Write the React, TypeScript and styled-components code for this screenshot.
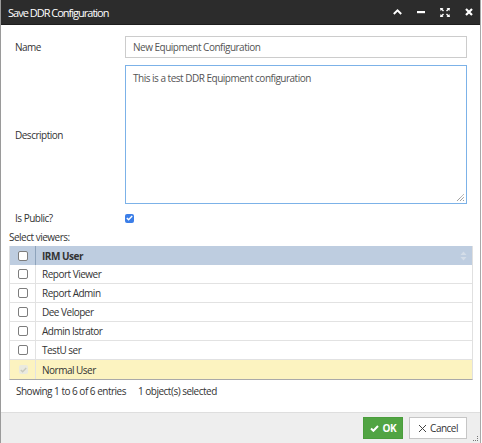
import React from "react";
import styled, { createGlobalStyle } from "styled-components";

const Global = createGlobalStyle`
  html, body { margin: 0; padding: 0; background: #ffffff; }
  body { font-family: "Open Sans", "Noto Sans", sans-serif; }
  * { box-sizing: border-box; }
`;

const Dialog = styled.div`
  width: 481px;
  height: 443px;
  display: flex;
  flex-direction: column;
  background: #ffffff;
  border-left: 1px solid #9a9a9a;
  border-right: 1px solid #a8a8a8;
  font-family: "Open Sans", "Noto Sans", sans-serif;
  font-size: 10px;
  letter-spacing: -0.5px;
  color: #333333;
  position: relative;
`;

const TitleBar = styled.div`
  height: 25px;
  flex: none;
  background: #2c2c2c;
  border-bottom: 1px solid #1e1e1e;
  display: flex;
  align-items: center;
  padding: 0 7px 0 7px;
`;

const Title = styled.div`
  flex: 1;
  color: #ffffff;
  font-size: 11px;
  letter-spacing: -1px;
`;

const TitleIcons = styled.div`
  display: flex;
  align-items: center;
  gap: 15px;
`;

const IconBox = styled.span<{ w: number }>`
  display: inline-flex;
  align-items: center;
  justify-content: center;
  width: ${(p) => p.w}px;
  height: 10px;
`;

const Body = styled.div`
  padding: 11px 7px 0 8px;
  display: flex;
  flex-direction: column;
`;

const FormGrid = styled.div`
  display: grid;
  grid-template-columns: 110px 1fr;
  row-gap: 7px;
  padding: 0 6px 0 6px;
  align-items: center;
`;

const Label = styled.label`
  font-size: 10px;
  color: #333;
`;

const TextInput = styled.div`
  height: 22px;
  border: 1px solid #cccccc;
  padding: 0 7px;
  display: flex;
  align-items: center;
  color: #555;
  font-size: 10px;
`;

const TextArea = styled.div`
  height: 139px;
  border: 1px solid #7cb2e8;
  padding: 5px 7px;
  color: #555;
  font-size: 10px;
  position: relative;
`;

const Grip = styled.svg`
  position: absolute;
  right: 1px;
  bottom: 1px;
`;

const Check = styled.span<{ disabled?: boolean }>`
  width: 9px;
  height: 9px;
  border-radius: 2px;
  background: ${(p) => (p.disabled ? "#eaeadf" : "#3b7ee8")};
  display: inline-flex;
  align-items: center;
  justify-content: center;
`;

const EmptyCheck = styled.span`
  width: 10px;
  height: 10px;
  border: 1px solid #7d7d7d;
  border-radius: 2px;
  background: #ffffff;
  display: inline-block;
`;

const PublicRow = styled.div`
  height: 13px;
  display: flex;
  align-items: center;
`;

const SectionLabel = styled.div`
  margin-top: 6px;
  height: 12px;
  line-height: 12px;
  font-size: 10px;
  color: #333;
`;

const Table = styled.div`
  margin-top: 3px;
  border-left: 1px solid #e0e0e0;
  border-right: 1px solid #e0e0e0;
  border-bottom: 1px solid #a9a9a9;
`;

const Row = styled.div<{ variant?: "head" | "selected" }>`
  display: grid;
  grid-template-columns: 26px 1fr;
  height: 19px;
  background: ${(p) =>
    p.variant === "head" ? "#becde0" : p.variant === "selected" ? "#fcf3c0" : "#ffffff"};
  border-bottom: ${(p) => (p.variant === "head" ? "none" : "1px solid #e2e2e2")};
  font-weight: ${(p) => (p.variant === "head" ? 700 : 400)};
  position: relative;
  &:last-child { border-bottom: none; }
`;

const CheckCell = styled.div<{ head?: boolean }>`
  display: flex;
  align-items: center;
  justify-content: center;
  border-right: 1px solid ${(p) => (p.head ? "#8ea3bb" : "#e2e2e2")};
  padding-left: 1px;
`;

const NameCell = styled.div`
  display: flex;
  align-items: center;
  padding-left: 6px;
  font-size: 10px;
  color: #333;
`;

const SortIcon = styled.svg`
  position: absolute;
  right: 5px;
  top: 5px;
`;

const Info = styled.div`
  margin-top: 4px;
  padding-left: 7px;
  height: 14px;
  line-height: 14px;
  font-size: 10px;
  color: #333;
  display: flex;
  gap: 12px;
`;

const ButtonBar = styled.div`
  margin-top: auto;
  height: 31px;
  flex: none;
  background: #eeeeee;
  border-top: 1px solid #dedede;
  display: flex;
  justify-content: flex-end;
  align-items: flex-start;
  padding: 4px 13px 0 0;
  gap: 6px;
  position: relative;
`;

const Button = styled.button<{ primary?: boolean }>`
  height: 22px;
  padding: 0 ${(p) => (p.primary ? 6 : 8)}px;
  border: 1px solid ${(p) => (p.primary ? "#4a9d3c" : "#c6c6c6")};
  background: ${(p) => (p.primary ? "#51a443" : "#ffffff")};
  color: ${(p) => (p.primary ? "#ffffff" : "#333333")};
  font-family: "Open Sans", "Noto Sans", sans-serif;
  font-size: 10px;
  letter-spacing: -0.5px;
  font-weight: ${(p) => (p.primary ? 700 : 400)};
  display: inline-flex;
  align-items: center;
  gap: 3px;
  border-radius: 0;
`;

const ResizeDots = styled.svg`
  position: absolute;
  right: 1px;
  bottom: 1px;
`;

const users = ["Report Viewer", "Report Admin", "Dee Veloper", "Admin Istrator", "TestU ser", "Normal User"];

const Tick = ({ color }: { color: string }) => (
  <svg width="7" height="6" viewBox="0 0 7 6">
    <path d="M0.8 3.1 L2.6 4.8 L6.2 1" stroke={color} strokeWidth="1.4" fill="none" />
  </svg>
);

export default function App() {
  return (
    <>
      <Global />
      <Dialog>
        <TitleBar>
          <Title>Save DDR Configuration</Title>
          <TitleIcons>
            <IconBox w={9}>
              <svg width="9" height="6" viewBox="0 0 9 6">
                <path d="M0.8 5 L4.5 1.4 L8.2 5" stroke="#fff" strokeWidth="2" fill="none" />
              </svg>
            </IconBox>
            <IconBox w={8}>
              <svg width="8" height="3" viewBox="0 0 8 3">
                <rect x="0" y="0" width="8" height="2.2" fill="#fff" />
              </svg>
            </IconBox>
            <IconBox w={10}>
              <svg width="10" height="9" viewBox="0 0 10 9">
                <g fill="#fff">
                  <path d="M0 0 H3.5 L2.5 1 L4 2.5 L3 3.5 L1.5 2 L0.6 3 Z" />
                  <path d="M10 0 H6.5 L7.5 1 L6 2.5 L7 3.5 L8.5 2 L9.4 3 Z" />
                  <path d="M0 9 H3.5 L2.5 8 L4 6.5 L3 5.5 L1.5 7 L0.6 6 Z" />
                  <path d="M10 9 H6.5 L7.5 8 L6 6.5 L7 5.5 L8.5 7 L9.4 6 Z" />
                </g>
              </svg>
            </IconBox>
            <IconBox w={8}>
              <svg width="8" height="8" viewBox="0 0 8 8">
                <path d="M1 1 L7 7 M7 1 L1 7" stroke="#fff" strokeWidth="2.2" />
              </svg>
            </IconBox>
          </TitleIcons>
        </TitleBar>
        <Body>
          <FormGrid>
            <Label>Name</Label>
            <TextInput>New Equipment Configuration</TextInput>
            <Label>Description</Label>
            <TextArea>
              This is a test DDR Equipment configuration
              <Grip width="9" height="9" viewBox="0 0 9 9">
                <path d="M1 8 L8 1 M4 8 L8 4 M7 8 L8 7" stroke="#555" strokeWidth="0.8" strokeDasharray="1 0.6" />
              </Grip>
            </TextArea>
            <Label>Is Public?</Label>
            <PublicRow>
              <Check>
                <Tick color="#ffffff" />
              </Check>
            </PublicRow>
          </FormGrid>
          <SectionLabel>Select viewers:</SectionLabel>
          <Table>
            <Row variant="head">
              <CheckCell head>
                <EmptyCheck />
              </CheckCell>
              <NameCell>IRM User</NameCell>
              <SortIcon width="7" height="10" viewBox="0 0 7 10">
                <path d="M3.5 0.5 L6.5 4 H0.5 Z M3.5 9.5 L6.5 6 H0.5 Z" fill="#d4dde8" />
              </SortIcon>
            </Row>
            {users.map((u) => {
              const sel = u === "Normal User";
              return (
                <Row key={u} variant={sel ? "selected" : undefined}>
                  <CheckCell>
                    {sel ? (
                      <Check disabled>
                        <Tick color="#c9c9bd" />
                      </Check>
                    ) : (
                      <EmptyCheck />
                    )}
                  </CheckCell>
                  <NameCell>{u}</NameCell>
                </Row>
              );
            })}
          </Table>
          <Info>
            <span>Showing 1 to 6 of 6 entries</span>
            <span>1 object(s) selected</span>
          </Info>
        </Body>
        <ButtonBar>
          <Button primary>
            <svg width="9" height="7" viewBox="0 0 9 7">
              <path d="M1 3.5 L3.4 5.8 L8 1" stroke="#fff" strokeWidth="2" fill="none" />
            </svg>
            OK
          </Button>
          <Button>
            <svg width="9" height="9" viewBox="0 0 9 9">
              <path d="M1 1 L8 8 M8 1 L1 8" stroke="#444" strokeWidth="1" />
            </svg>
            Cancel
          </Button>
          <ResizeDots width="6" height="6" viewBox="0 0 6 6">
            <g fill="#777">
              <rect x="4" y="0" width="1" height="1" />
              <rect x="4" y="2" width="1" height="1" />
              <rect x="4" y="4" width="1" height="1" />
              <rect x="2" y="4" width="1" height="1" />
              <rect x="0" y="4" width="1" height="1" />
            </g>
          </ResizeDots>
        </ButtonBar>
      </Dialog>
    </>
  );
}
